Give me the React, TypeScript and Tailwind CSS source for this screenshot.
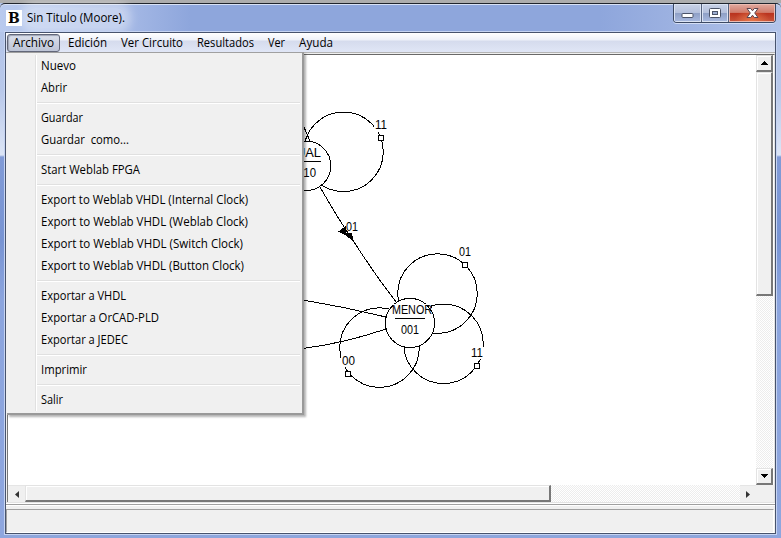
import React from "react";

type Entry = { label: string; width: number } | null;

const bar = [
  { label: "Archivo", width: 41 },
  { label: "Edición", width: 39 },
  { label: "Ver Circuito", width: 62 },
  { label: "Resultados", width: 57 },
  { label: "Ver", width: 17 },
  { label: "Ayuda", width: 34 },
];

const entries: Entry[] = [
  { label: "Nuevo", width: 35 },
  { label: "Abrir", width: 26 },
  null,
  { label: "Guardar", width: 42 },
  { label: "Guardar  como...", width: 88 },
  null,
  { label: "Start Weblab FPGA", width: 99 },
  null,
  { label: "Export to Weblab VHDL (Internal Clock)", width: 207 },
  { label: "Export to Weblab VHDL (Weblab Clock)", width: 207 },
  { label: "Export to Weblab VHDL (Switch Clock)", width: 202 },
  { label: "Export to Weblab VHDL (Button Clock)", width: 203 },
  null,
  { label: "Exportar a VHDL", width: 85 },
  { label: "Exportar a OrCAD-PLD", width: 118 },
  { label: "Exportar a JEDEC", width: 87 },
  null,
  { label: "Imprimir", width: 46 },
  null,
  { label: "Salir", width: 22 },
];

/* A label stretched to the width the interface font gives it. */
function Label({ text, width }: { text: string; width: number }) {
  return (
    <svg width={width} height={20} className="block shrink-0 overflow-visible">
      <text
        x={0}
        y={14}
        textLength={width}
        lengthAdjust="spacingAndGlyphs"
        className="fill-black font-['Open_Sans','Noto_Sans',sans-serif] text-[12px] whitespace-pre"
      >
        {text}
      </text>
    </svg>
  );
}

function Menu() {
  return (
    <div className="absolute left-px top-[19px] z-10 h-[363px] w-[297px] border-r-2 border-b-2 border-t border-r-[#999] border-b-[#999] border-t-[#a0a0a0] bg-[#f0f0f0] pt-[2px] shadow-[2px_2px_2px_rgba(0,0,0,0.3)]">
      <div className="ml-[28px] mr-[2px] h-[356px] border-l border-[#e0e0e0]">
        <div className="h-full border-l border-white">
          {entries.map((e, i) =>
            e ? (
              <div key={i} className="flex h-[22px] items-center pl-[4px]">
                <Label text={e.label} width={e.width} />
              </div>
            ) : (
              <div key={i} className="flex h-2 flex-col justify-center">
                <div className="h-[2px] border-t border-b border-t-[#e0e0e0] border-b-white" />
              </div>
            ),
          )}
        </div>
      </div>
    </div>
  );
}

function Mark({ x, y }: { x: number; y: number }) {
  return <rect x={x - 2.5} y={y - 2.5} width={5} height={5} fill="white" stroke="black" />;
}

function Txt({ x, y, w, children }: { x: number; y: number; w: number; children: string }) {
  return (
    <text
      x={x}
      y={y}
      textLength={w}
      lengthAdjust="spacingAndGlyphs"
      className="fill-black stroke-none font-['Liberation_Sans',Arial,sans-serif] text-[13.5px]"
    >
      {children}
    </text>
  );
}

function Diagram() {
  return (
    <svg
      width={748}
      height={430}
      viewBox="8 55 748 430"
      fill="none"
      stroke="black"
      strokeWidth={1}
      shapeRendering="crispEdges"
      className="block"
    >
      <circle cx={343.5} cy={151.8} r={39.8} />
      <path d="M303 125L310 141" />
      <circle cx={306} cy={165.8} r={24.8} fill="white" />
      <path d="M302 161.5H321" />
      <circle cx={437.5} cy={293.6} r={39.8} />
      <circle cx={443.5} cy={343.8} r={39.8} />
      <circle cx={379.5} cy={347.6} r={39.8} />
      <path d="M320 187Q340 222 356 245Q375 275 397 303" />
      <path d="M303 300Q345 307 386 317M303 348.5Q345 343 386 329" />
      <circle cx={410} cy={323} r={24.6} fill="white" />
      <path d="M395 318.5H425M426 305L433 305L430 309Z" />
      <path d="M338.5 231.5L345.5 226L347 236ZM342 233H352L353.5 241Z" fill="black" stroke="none" />
      <g stroke="none" fill="white">
        <rect x={374} y={118} width={13} height={14} />
        <rect x={471} y={347} width={13} height={12} />
        <rect x={341} y={354} width={14} height={13} />
        <rect x={392} y={304} width={39} height={13} />
      </g>
      <path d="M391.5 307.5L393 305M427 305L432 312" />
      <Mark x={381} y={138} />
      <Mark x={465} y={265} />
      <Mark x={477} y={366} />
      <Mark x={348} y={374} />
      <Txt x={296} y={157} w={25}>UAL</Txt>
      <Txt x={297} y={177} w={19}>010</Txt>
      <Txt x={375} y={129} w={12}>11</Txt>
      <Txt x={346} y={231} w={12}>01</Txt>
      <Txt x={459} y={256} w={12}>01</Txt>
      <Txt x={471} y={357} w={12}>11</Txt>
      <Txt x={342} y={365} w={13}>00</Txt>
      <Txt x={392} y={314} w={40}>MENOR</Txt>
      <Txt x={401} y={334} w={18}>001</Txt>
    </svg>
  );
}

function Buttons() {
  return (
    <div className="mr-[5px] flex h-[19px] w-[103px] overflow-hidden rounded-b-[4px] border border-t-0 border-[#3c4963] shadow-[0_1px_0_#d4def5]">
      <div className="flex w-[28px] items-center justify-center border-r border-[#56637e] bg-[linear-gradient(#c9d2e6_0%,#b4c0dc_48%,#8e9fc5_50%,#a9bae0_100%)] shadow-[inset_0_0_0_1px_#dbe3f3]">
        <svg width={13} height={7} className="mt-1"><rect x={1} y={1.5} width={11} height={4} rx={1} fill="white" stroke="#4b5367" /></svg>
      </div>
      <div className="flex w-[27px] items-center justify-center border-r border-[#56637e] bg-[linear-gradient(#c9d2e6_0%,#b4c0dc_48%,#8e9fc5_50%,#a9bae0_100%)] shadow-[inset_0_0_0_1px_#dbe3f3]">
        <svg width={12} height={11}>
          <rect x={0.5} y={0.5} width={11} height={9} rx={1} fill="white" stroke="#4b5367" />
          <rect x={3.5} y={3.5} width={5} height={3} fill="#9cadd0" stroke="#4b5367" />
        </svg>
      </div>
      <div className="flex flex-1 items-center justify-center bg-[radial-gradient(ellipse_at_50%_100%,#e9784b_0%,transparent_55%),linear-gradient(#e1aaa0_0%,#d07c6c_47%,#b9311d_50%,#c9563b_100%)] shadow-[inset_0_0_0_1px_#ecbcb2]">
        <svg width={13} height={11}>
          <path d="M1 .5H4.7L6.5 2.8L8.3 .5H12L8.7 5L12 9.5H8.3L6.5 7.2L4.7 9.5H1L4.3 5Z" fill="white" stroke="#5b4650" />
        </svg>
      </div>
    </div>
  );
}

const raised =
  "border-t border-l border-r-2 border-b-2 border-t-[#e3e3e3] border-l-[#e3e3e3] border-r-[#777] border-b-[#777] bg-[#f0f0f0] shadow-[inset_1px_1px_0_white]";
const dither =
  "bg-white bg-[repeating-conic-gradient(#ededed_0%_25%,#fff_0%_50%)] bg-[length:2px_2px]";

export default function App() {
  return (
    <div className="flex h-[538px] w-[781px] flex-col overflow-hidden bg-[linear-gradient(90deg,transparent_0,transparent_6px,#8ea6dc_6px,#8ea6dc_775px,transparent_775px),linear-gradient(#b1c3e9_0px,#b8c8ea_90px,#dce5f6_155px,#819bd7_157px,#7894d3_240px,#8ca5de_300px,#8ea6de_538px)]">
      <div className="h-[3px] shrink-0 bg-[#adadad]" />
      <div className="flex h-[29px] shrink-0 items-start rounded-t-[5px] border-t border-[#20242c] bg-[linear-gradient(90deg,#b9caee_0,#a4b8e5_130px,#8ea6dc_190px,#8ea6dc_600px,#a0b4e2_690px,#b3c4e9_100%)] shadow-[inset_0_1px_0_#d9e2f5]">
        <div className="ml-[6px] mt-[6px] flex h-4 w-4 items-center justify-center bg-white font-['DejaVu_Serif',serif] text-[14px] leading-4 font-bold text-black">B</div>
        <div className="ml-[5px] mt-[4px] rounded-lg bg-white/35 shadow-[0_0_9px_6px_rgba(255,255,255,0.35)]">
          <Label text="Sin Titulo (Moore)." width={98} />
        </div>
        <div className="flex-1" />
        <Buttons />
      </div>
      <div className="ml-[5px] mr-[5px] flex h-[502px] flex-col border border-[#47536d] bg-[#f0f0f0] shadow-[0_0_0_1px_#c6d4f2]">
        <div className="relative flex h-[19px] shrink-0 bg-[linear-gradient(#ffffff_0,#eef1f9_7px,#d5dbed_8px,#e0e6f6_19px)] pl-[1px] pt-px">
          {bar.map((b, i) => (
            <div
              key={b.label}
              className={
                i === 0
                  ? "flex h-[18px] w-[53px] shrink-0 items-center justify-center rounded-[3px] border border-[#626779] bg-[linear-gradient(#dce0eb,#bdc4d6)] shadow-[inset_1px_1px_1px_#9da4b5] mr-px"
                  : "flex h-[18px] items-center px-[7px]"
              }
            >
              <Label text={b.label} width={b.width} />
            </div>
          ))}
          <Menu />
        </div>
        <div className="h-px shrink-0 bg-[#b5b5b5]" />
        <div className="h-px shrink-0 bg-[#f0f0f0]" />
        <div className="ml-px flex h-[448px] shrink-0 flex-col border-t border-l border-r border-t-[#696969] border-l-[#777] border-r-[#e3e3e3] bg-white">
          <div className="flex h-[430px]">
            <div className="h-[430px] w-[748px] overflow-hidden">
              <Diagram />
            </div>
            <div className={`flex w-[17px] flex-col ${dither}`}>
              <div className={`flex h-[17px] shrink-0 items-center justify-center ${raised}`}>
                <svg width={7} height={4} shapeRendering="crispEdges"><path d="M0 4H7L3.5 0Z" /></svg>
              </div>
              <div className={`h-[224px] shrink-0 ${raised}`} />
              <div className="flex-1" />
              <div className={`flex h-[17px] shrink-0 items-center justify-center ${raised}`}>
                <svg width={7} height={4} shapeRendering="crispEdges"><path d="M0 0H7L3.5 4Z" /></svg>
              </div>
            </div>
          </div>
          <div className="flex h-[17px] shrink-0">
            <div className="flex w-[17px] items-center justify-center border-t border-[#e5e5e5] bg-[#f0f0f0]">
              <svg width={4} height={7}><path d="M4 0V7L0 3.5Z" fill="#333" /></svg>
            </div>
            <div className={`w-[526px] ${raised}`} />
            <div className={`flex-1 ${dither}`} />
            <div className="flex w-[16px] items-center justify-center border-t border-[#e5e5e5] bg-[#f0f0f0]">
              <svg width={4} height={7}><path d="M0 0V7L4 3.5Z" fill="#333" /></svg>
            </div>
            <div className="w-[18px] bg-[#f0f0f0]" />
          </div>
        </div>
        <div className="h-px shrink-0 bg-[#e3e3e3]" />
        <div className="h-px shrink-0 bg-white" />
        <div className="h-px shrink-0 bg-[#a0a0a0]" />
        <div className="h-px shrink-0 bg-white" />
        <div className="h-[3px] shrink-0 bg-[#f0f0f0]" />
        <div className="mr-px flex-1 border-t border-l border-r border-b border-t-[#a0a0a0] border-l-[#a0a0a0] border-r-white border-b-white" />
      </div>
    </div>
  );
}
